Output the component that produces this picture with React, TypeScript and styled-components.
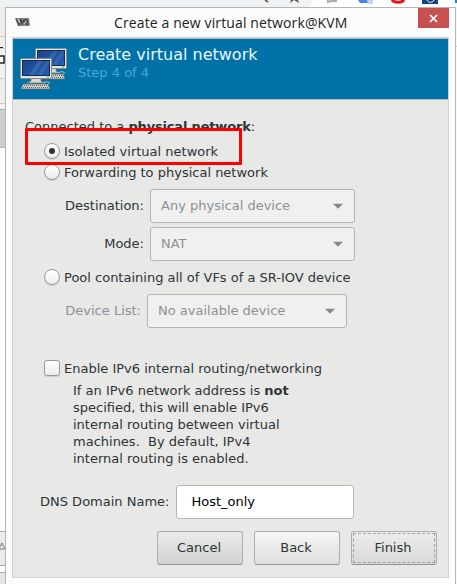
import React from "react";
import styled, { createGlobalStyle, css } from "styled-components";

const Global = createGlobalStyle`
  *, *::before, *::after { box-sizing: border-box; }
  body { margin: 0; overflow: hidden; background: #fff; }
`;

const Desktop = styled.div`
  position: relative;
  width: 457px;
  height: 584px;
  overflow: hidden;
  display: grid;
  grid-template-columns: 5px 451px 1px;
  grid-template-rows: 7px 577px;
  background: #fff;
  color: #2e3436;
  font: 13px/17px "DejaVu Sans", sans-serif;
`;

const Backdrop = styled.div`
  grid-column: 1 / -1;
  background: #f1f2f4;
  overflow: hidden;
  svg { display: block; }
`;

const Strip = styled.div`
  display: flex;
  flex-direction: column;
  overflow: hidden;
`;

const Slab = styled.div<{ $h: number; $bg: string; $line?: string }>`
  flex: none;
  height: ${(p) => p.$h}px;
  background: ${(p) => p.$bg};
  border-bottom: ${(p) => (p.$line ? `1px solid ${p.$line}` : "0")};
  overflow: hidden;
  svg { display: block; }
`;

const Window = styled.section`
  display: flex;
  flex-direction: column;
  background: #fcfcfc;
  border: 1px solid #b5b5b5;
  border-bottom: 0;
  padding: 0 6px 6px;
`;

const TitleBar = styled.header`
  flex: none;
  height: 29px;
  display: grid;
  grid-template-columns: 102px 1fr 31px;
  svg { display: block; }
`;

const AppIcon = styled.div`
  padding: 10px 0 0 3px;
`;

const Title = styled.h1`
  margin: 0;
  padding-top: 5px;
  font: 400 14px/20px "Open Sans", sans-serif;
  letter-spacing: 0.12px;
  color: #222;
  white-space: nowrap;
`;

const CloseButton = styled.button`
  width: 31px;
  height: 20px;
  padding: 0;
  border: 0;
  background: #c75050;
  display: grid;
  place-items: center;
`;

const Panel = styled.main`
  flex: none;
  width: 437px;
  height: 541px;
  border: 1px solid #d0d1d0;
  background: #e8e8e7;
  display: flex;
  flex-direction: column;
`;

const Banner = styled.div`
  flex: none;
  height: 62px;
  border-top: 1px solid #b8b8b6;
  border-bottom: 1px solid #a9bcc5;
  background: #0072a8;
  display: flex;
  gap: 10px;
  padding: 6px 0 0 7px;
  svg { margin-top: 2px; }
`;

const BannerTitle = styled.h2`
  margin: 0;
  font: 400 16px/19px "DejaVu Sans", sans-serif;
  color: #e9f6fd;
`;

const BannerStep = styled.p`
  margin: 0;
  font-size: 13px;
  line-height: 17px;
  color: #4da6d8;
`;

const Row = styled.div<{ $h: number; $indent?: number; $gap?: number; $dim?: boolean }>`
  flex: none;
  display: flex;
  align-items: center;
  height: ${(p) => p.$h}px;
  padding-left: ${(p) => p.$indent ?? 0}px;
  gap: ${(p) => p.$gap ?? 4}px;
  color: ${(p) => (p.$dim ? "#8e9192" : "#2e3436")};
  white-space: pre;
`;

const OptionLabel = styled.span`
  padding-top: 2px;
`;

const Strong = styled.b`
  letter-spacing: -0.17px;
`;

const Gap = styled.div<{ $h: number }>`
  flex: none;
  height: ${(p) => p.$h}px;
`;

const indicator = css`
  flex: none;
  width: 16px;
  height: 16px;
  border: 1px solid #989a95;
  background: linear-gradient(#fff, #ececeb);
  box-shadow: 0 1px 0 rgba(0, 0, 0, 0.12);
  display: grid;
  place-items: center;
`;

const Radio = styled.span<{ $on?: boolean }>`
  ${indicator}
  border-radius: 50%;
  &::after {
    content: "";
    width: 6px;
    height: 6px;
    border-radius: 50%;
    background: ${(p) => (p.$on ? "#2e3436" : "transparent")};
  }
`;

const Checkbox = styled.span`
  ${indicator}
  border-radius: 3px;
`;

const FieldLabel = styled.label<{ $w: number }>`
  flex: none;
  width: ${(p) => p.$w}px;
  padding-bottom: 1px;
  text-align: right;
`;

const Combo = styled.div<{ $w: number }>`
  flex: none;
  width: ${(p) => p.$w}px;
  height: 34px;
  border: 1px solid #b5b6b2;
  border-radius: 3px;
  background: #f0f0f0;
  color: #8e9192;
  display: flex;
  align-items: center;
  justify-content: space-between;
  padding: 0 11px 1px 10px;
`;

const Help = styled.p`
  flex: none;
  margin: 0;
  height: 85px;
  padding-left: 60px;
  white-space: pre;
`;

const DomainLabel = styled.label`
  padding-bottom: 1px;
`;

const Input = styled.div`
  width: 178px;
  height: 34px;
  border: 1px solid #b5b6b2;
  border-radius: 3px;
  background: #fff;
  color: #000;
  padding: 7px 14px;
`;

const Button = styled.button<{ $tone?: "pressed" | "focus" }>`
  width: 86px;
  height: 34px;
  padding: 0 2px 2px 0;
  border: 1px solid #adafaa;
  border-bottom-color: #92948f;
  border-radius: 3px;
  background: ${(p) =>
    p.$tone ? "linear-gradient(#ebebeb, #d2d2d1)" : "linear-gradient(#f7f7f7, #dededd)"};
  color: #2e3436;
  font: inherit;
  ${(p) =>
    p.$tone === "focus" &&
    css`
      outline: 1px dashed #a0a29e;
      outline-offset: -3px;
      background: linear-gradient(#ececec, #d9d9d8);
    `}
`;

const Highlight = styled.div`
  position: absolute;
  left: 25px;
  top: 128px;
  width: 217px;
  height: 37px;
  border: 3px solid #f00;
  border-radius: 1px;
`;

const Arrow = () => (
  <svg width="10" height="6" viewBox="0 0 10 6">
    <path d="M0 .8h10L5 5.8z" fill="#858886" />
  </svg>
);

const Monitor = ({ x, y }: { x: number; y: number }) => (
  <g transform={`translate(${x} ${y})`}>
    <path d="M11 20h10v3l3 2H7l4-2z" fill="#d8d8d4" stroke="#777a76" strokeWidth=".7" />
    <path d="M23 25c5-3 9 0 4 2" fill="none" stroke="#b9c8cf" />
    <path d="M3 26h25l2 5H1z" fill="#d3d4cf" stroke="#666965" strokeWidth=".8" />
    <path d="M4 27.5h23M3 29.5h25" stroke="#60635f" strokeDasharray="1 1" />
    <rect x=".5" y=".5" width="31" height="20" rx="1" fill="#e5e5df" stroke="#898b85" />
    <rect x="2.5" y="2.5" width="27" height="15" fill="url(#screen)" stroke="#102b5d" />
    <path d="M9 17 18 3h5l-9 14z" fill="#779fd4" opacity=".25" />
    <path d="m17 17 9-14h3v2l-7 12z" fill="#779fd4" opacity=".2" />
    <path d="M27 19h2" stroke="#72a044" />
  </g>
);

const NetworkIcon = () => (
  <svg width="48" height="44" viewBox="0 0 48 44">
    <defs>
      <linearGradient id="screen" x2="1" y2="1">
        <stop stopColor="#1a4389" />
        <stop offset="1" stopColor="#2860b0" />
      </linearGradient>
    </defs>
    <Monitor x={15} y={1} />
    <Monitor x={0} y={11} />
  </svg>
);

export default function App() {
  return (
    <>
      <Global />
      <Desktop>
        <Backdrop>
          <svg width="457" height="7" viewBox="0 0 457 7">
            <path d="M308 7 314 0h143v7z" fill="#fff" />
            <path d="m265 0 3 2" stroke="#666" strokeWidth="2" />
            <path d="m290 3 4-3 5 3-1-3h-7z" fill="#555" />
            <path d="M328 0v2l4-1h5" fill="none" stroke="#aaa" strokeWidth="2" />
            <path d="M358 0h9l3 3h-10z" fill="#4285f4" />
            <path d="M367 0h6v4h-5z" fill="#cbd5e4" />
            <path d="M392 0c2 3 10 3 12 0" fill="none" stroke="#e5131a" strokeWidth="3" />
            <path d="M422 0h16v4h-16z" fill="#14427c" />
            <path d="M427 0c1 3 6 3 7 0" fill="none" stroke="#fff" />
            <path d="M455 0h2v3h-2z" fill="#168acb" />
          </svg>
        </Backdrop>
        <Strip>
          <Slab $h={30} $bg="#eeeeed" $line="#ccc" />
          <Slab $h={12} $bg="#eeeeed" $line="#ccc">
            <svg width="5" height="12"><path d="M0 10.5h3" stroke="#222" /></svg>
          </Slab>
          <Slab $h={30} $bg="#f1f1f0" $line="#ccc">
            <svg width="5" height="20"><path d="M0 7h4v7H0" fill="#fff" stroke="#222" strokeWidth="1.5" /></svg>
          </Slab>
          <Slab $h={25} $bg="#eeeeed" $line="#ccc" />
          <Slab $h={6} $bg="#f3f3f3" $line="#aaa" />
          <Slab $h={38} $bg="#cdcdcd" $line="#b5b5b5" />
          <Slab $h={384} $bg="#fff" $line="#aaa" />
          <Slab $h={34} $bg="#ececec" $line="#aaa">
            <svg width="5" height="25"><path d="m-1 17 3-6 3 6z" fill="none" stroke="#777" /></svg>
          </Slab>
          <Slab $h={7} $bg="#fff" $line="#aaa" />
          <Slab $h={11} $bg="#e5e5e5" />
        </Strip>
        <Window>
          <TitleBar>
            <AppIcon>
              <svg width="16" height="9" viewBox="0 0 16 9">
                <path d="M0 0h14l1 8H3z" fill="#858585" />
                <path d="m1 1 3 6 2-6 1 6M7 5l4-4M8 2l4 5M12 1l1 6" fill="none" stroke="#444" strokeWidth="1.1" />
                <path d="m3 1 2 4M9 6l2-2" stroke="#ddd" />
              </svg>
            </AppIcon>
            <Title>Create a new virtual network@KVM</Title>
            <CloseButton aria-label="Close">
              <svg width="9" height="9" viewBox="0 0 9 9">
                <path d="m1 1 7 7M8 1 1 8" stroke="#fff" strokeWidth="1.7" />
              </svg>
            </CloseButton>
          </TitleBar>
          <Panel>
            <Banner>
              <NetworkIcon />
              <div>
                <BannerTitle>Create virtual network</BannerTitle>
                <BannerStep>Step 4 of 4</BannerStep>
              </div>
            </Banner>
            <Gap $h={17} />
            <Row $h={18} $indent={12} $gap={0}>
              {"Connected to a "}<Strong>physical network</Strong>:
            </Row>
            <Gap $h={5} />
            <Row $h={21} $indent={31}>
              <Radio $on />
              <OptionLabel>Isolated virtual network</OptionLabel>
            </Row>
            <Row $h={21} $indent={31}>
              <Radio />
              <OptionLabel>Forwarding to physical network</OptionLabel>
            </Row>
            <Gap $h={7} />
            <Row $h={34} $indent={51} $gap={6}>
              <FieldLabel $w={80}>Destination:</FieldLabel>
              <Combo $w={205}>Any physical device<Arrow /></Combo>
            </Row>
            <Gap $h={4} />
            <Row $h={34} $indent={51} $gap={6}>
              <FieldLabel $w={80}>Mode:</FieldLabel>
              <Combo $w={205}>NAT<Arrow /></Combo>
            </Row>
            <Gap $h={5} />
            <Row $h={21} $indent={31}>
              <Radio />
              <OptionLabel>Pool containing all of VFs of a SR-IOV device</OptionLabel>
            </Row>
            <Gap $h={7} />
            <Row $h={34} $indent={51} $gap={6} $dim>
              <FieldLabel $w={77}>Device List:</FieldLabel>
              <Combo $w={200}>No available device<Arrow /></Combo>
            </Row>
            <Gap $h={29} />
            <Row $h={21} $indent={31}>
              <Checkbox />
              <OptionLabel>Enable IPv6 internal routing/networking</OptionLabel>
            </Row>
            <Gap $h={4} />
            <Help>
              If an IPv6 network address is <b>not</b>
              {"\nspecified, this will enable IPv6\ninternal routing between virtual\nmachines.  By default, IPv4\ninternal routing is enabled."}
            </Help>
            <Gap $h={18} />
            <Row $h={34} $indent={27} $gap={7}>
              <DomainLabel>DNS Domain Name:</DomainLabel>
              <Input>Host_only</Input>
            </Row>
            <Gap $h={12} />
            <Row $h={34} $indent={144} $gap={11}>
              <Button $tone="pressed">Cancel</Button>
              <Button>Back</Button>
              <Button $tone="focus">Finish</Button>
            </Row>
          </Panel>
        </Window>
        <Strip>
          <Slab $h={40} $bg="#f7f7f7" $line="#ccc" />
          <Slab $h={537} $bg="#fafafa" />
        </Strip>
        <Highlight />
      </Desktop>
    </>
  );
}
